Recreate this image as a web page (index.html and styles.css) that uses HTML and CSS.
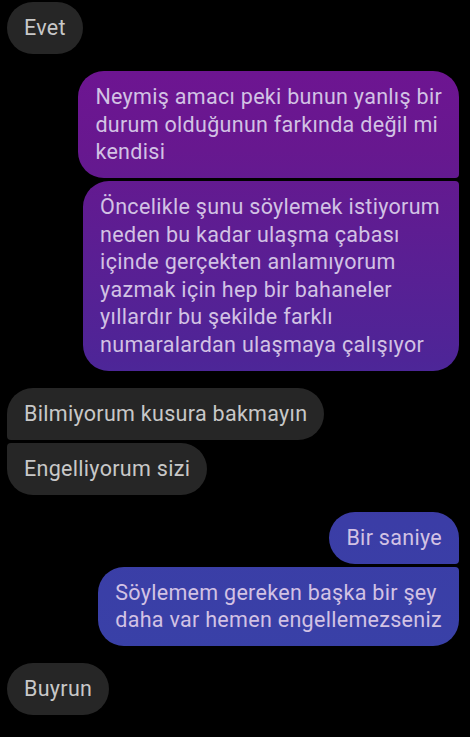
FILE: index.html
```html
<!DOCTYPE html>
<html lang="tr">
<head>
    <meta charset="UTF-8">
    <meta name="viewport" content="width=device-width, initial-scale=1.0">
    <title>Sohbet</title>
    <link rel="stylesheet" href="styles.css">
</head>
<body>

    <div class="chat">
        <div class="group in">
            <div class="msg">Evet</div>
        </div>

        <div class="group out">
            <div class="msg">Neymiş amacı peki bunun yanlış bir<br>durum olduğunun farkında değil mi<br>kendisi</div>
            <div class="msg wide">Öncelikle şunu söylemek istiyorum<br>neden bu kadar ulaşma çabası<br>içinde gerçekten anlamıyorum<br>yazmak için hep bir bahaneler<br>yıllardır bu şekilde farklı<br>numaralardan ulaşmaya çalışıyor</div>
        </div>

        <div class="group in">
            <div class="msg">Bilmiyorum kusura bakmayın</div>
            <div class="msg">Engelliyorum sizi</div>
        </div>

        <div class="group out">
            <div class="msg">Bir saniye</div>
            <div class="msg">Söylemem gereken başka bir şey<br>daha var hemen engellemezseniz</div>
        </div>

        <div class="group in">
            <div class="msg">Buyrun</div>
        </div>
    </div>

</body>
</html>
```

FILE: styles.css
```css
html, body {
    margin: 0;
    background: #000;
}
body {
    font-family: Roboto, "Noto Sans", sans-serif;
    font-size: 21.5px;
    letter-spacing: 0.3px;
    line-height: 27.5px;
}
.chat {
    display: flex;
    flex-direction: column;
    gap: 17px;
    padding: 2px 11px 0 7px;
}
.group {
    display: flex;
    flex-direction: column;
    gap: 3px;
}
.msg {
    padding: 12.25px 17px;
    border-radius: 26px;
    white-space: nowrap;
}
.msg.wide {
    padding-right: 19px;
}

/* incoming (grey, left) */
.in {
    align-items: flex-start;
}
.in .msg {
    background: #262626;
    color: #c8c8c8;
}
.in .msg:not(:last-child) {
    border-bottom-left-radius: 4px;
}
.in .msg:not(:first-child) {
    border-top-left-radius: 4px;
}

/* outgoing (gradient, right) */
.out {
    align-items: flex-end;
}
.out .msg {
    background: linear-gradient(180deg, #731293 0px, #67188f 150px, #4e2597 360px, #3b3da6 520px, #3843a8 737px) fixed;
    color: #d2c2e4;
}
.out .msg:not(:last-child) {
    border-bottom-right-radius: 4px;
}
.out .msg:not(:first-child) {
    border-top-right-radius: 4px;
}
```
